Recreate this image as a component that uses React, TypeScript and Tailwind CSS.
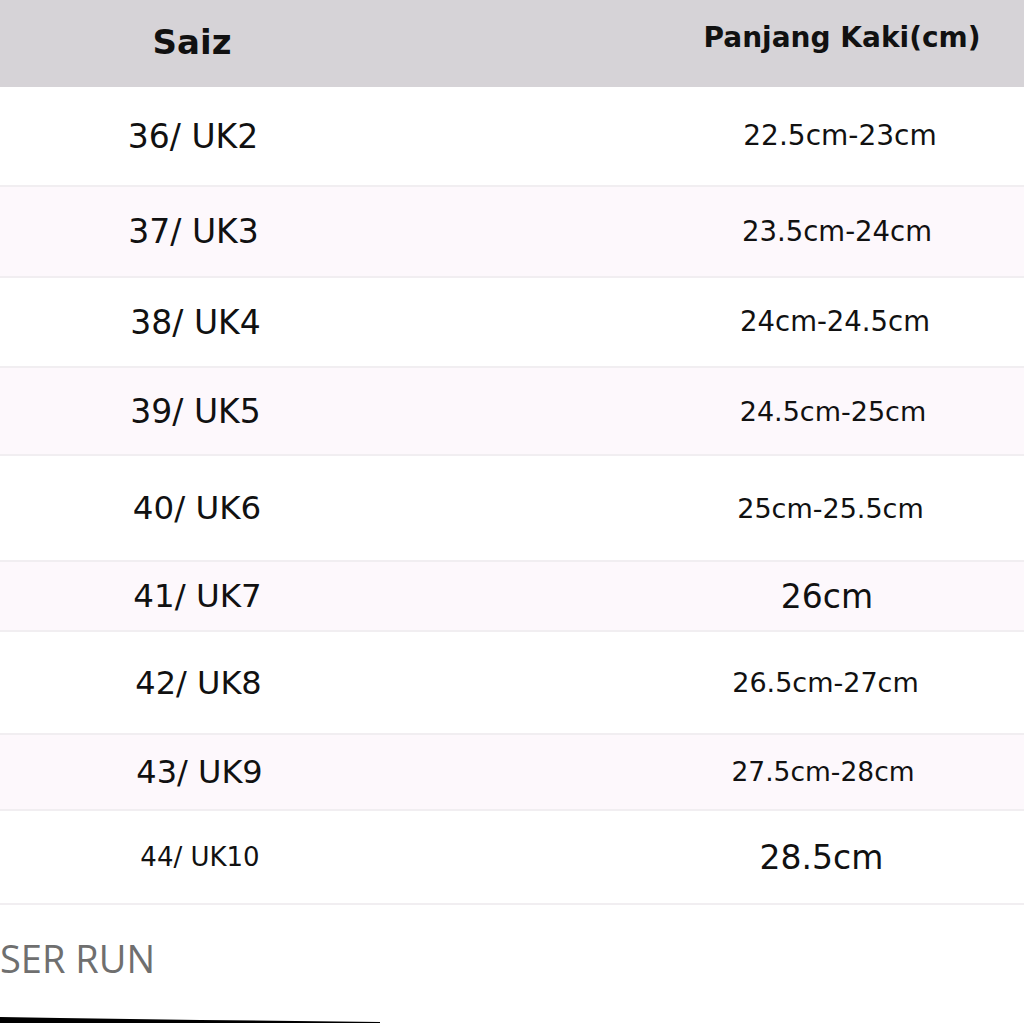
const rows = [
  { uk: "36/ UK2", cm: "22.5cm-23cm", h: "h-[100px]", bg: "bg-white", l: "w-[386px] text-[33px]", r: "w-[368px] text-[28px]" },
  { uk: "37/ UK3", cm: "23.5cm-24cm", h: "h-[91px]", bg: "bg-[#fdf8fc]", l: "w-[387px] text-[33px]", r: "w-[374px] text-[27.5px]" },
  { uk: "38/ UK4", cm: "24cm-24.5cm", h: "h-[90px]", bg: "bg-white", l: "w-[391px] text-[33px]", r: "w-[378px] text-[27.5px]" },
  { uk: "39/ UK5", cm: "24.5cm-25cm", h: "h-[88px]", bg: "bg-[#fdf8fc]", l: "w-[391px] text-[33px]", r: "w-[382px] text-[27px]" },
  { uk: "40/ UK6", cm: "25cm-25.5cm", h: "h-[106px]", bg: "bg-white", l: "w-[394px] text-[32.5px]", r: "w-[387px] text-[27px]" },
  { uk: "41/ UK7", cm: "26cm", h: "h-[70px]", bg: "bg-[#fdf8fc]", l: "w-[395px] text-[32.5px]", r: "w-[394px] text-[33px]" },
  { uk: "42/ UK8", cm: "26.5cm-27cm", h: "h-[103px]", bg: "bg-white", l: "w-[397px] text-[32px]", r: "w-[397px] text-[27px]" },
  { uk: "43/ UK9", cm: "27.5cm-28cm", h: "h-[76px]", bg: "bg-[#fdf8fc]", l: "w-[399px] text-[32px]", r: "w-[402px] text-[26.5px]" },
  { uk: "44/ UK10", cm: "28.5cm", h: "h-[94px]", bg: "bg-white", l: "w-[400px] text-[26px]", r: "w-[405px] text-[33px]" },
];

export default function App() {
  return (
    <div className="flex h-[1024px] w-[1024px] flex-col overflow-hidden bg-white font-['DejaVu_Sans',sans-serif] text-[#111]">
      <div className="flex h-[87px] items-center bg-[#d6d3d7]">
        <div className="w-[384px] pb-[3px] text-center text-[34px] font-bold">Saiz</div>
        <div className="flex-1" />
        <div className="w-[364px] pb-[11px] text-center text-[28px] font-bold">Panjang Kaki(cm)</div>
      </div>

      {rows.map((row) => (
        <div
          key={row.uk}
          className={`flex items-center border-b-2 border-[#f1eef1] ${row.h} ${row.bg}`}
        >
          <div className={`text-center leading-none ${row.l}`}>{row.uk}</div>
          <div className="flex-1" />
          <div className={`text-center leading-none ${row.r}`}>{row.cm}</div>
        </div>
      ))}

      <div className="flex flex-col">
        <div className="mt-[34px] font-['Open_Sans',sans-serif] text-[38px] leading-none text-[#6f6f6f]">
          SER RUN
        </div>
        <svg className="mt-[39px]" width="380" height="8" viewBox="0 0 380 8">
          <polygon points="0,1 60,2 200,4 380,6 380,7 0,7" fill="#000" />
        </svg>
      </div>
    </div>
  );
}
